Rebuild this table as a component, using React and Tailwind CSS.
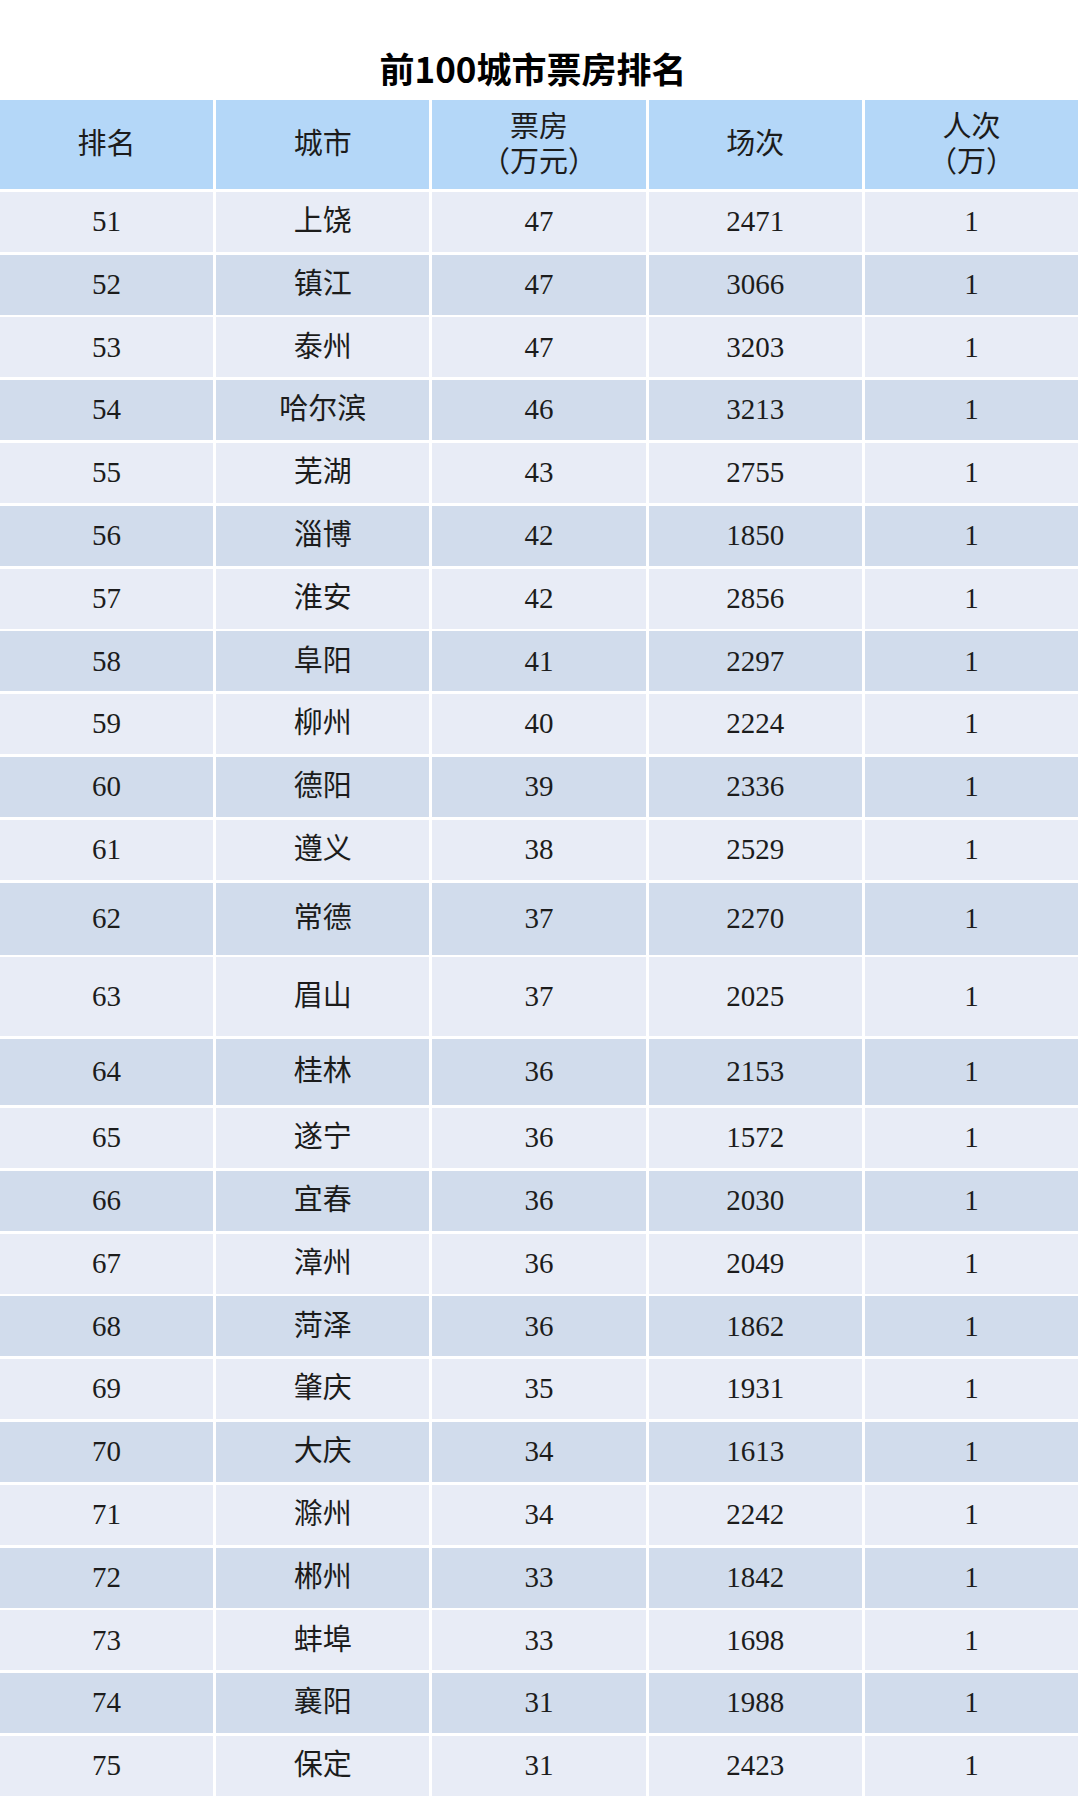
import React from "react";

const rows = [
  ["51", "上饶", "47", "2471", "1"],
  ["52", "镇江", "47", "3066", "1"],
  ["53", "泰州", "47", "3203", "1"],
  ["54", "哈尔滨", "46", "3213", "1"],
  ["55", "芜湖", "43", "2755", "1"],
  ["56", "淄博", "42", "1850", "1"],
  ["57", "淮安", "42", "2856", "1"],
  ["58", "阜阳", "41", "2297", "1"],
  ["59", "柳州", "40", "2224", "1"],
  ["60", "德阳", "39", "2336", "1"],
  ["61", "遵义", "38", "2529", "1"],
  ["62", "常德", "37", "2270", "1"],
  ["63", "眉山", "37", "2025", "1"],
  ["64", "桂林", "36", "2153", "1"],
  ["65", "遂宁", "36", "1572", "1"],
  ["66", "宜春", "36", "2030", "1"],
  ["67", "漳州", "36", "2049", "1"],
  ["68", "菏泽", "36", "1862", "1"],
  ["69", "肇庆", "35", "1931", "1"],
  ["70", "大庆", "34", "1613", "1"],
  ["71", "滁州", "34", "2242", "1"],
  ["72", "郴州", "33", "1842", "1"],
  ["73", "蚌埠", "33", "1698", "1"],
  ["74", "襄阳", "31", "1988", "1"],
  ["75", "保定", "31", "2423", "1"],
];

// a few rows in the picture are taller than the rest
const rowHeight = {
  62: "h-[72px]",
  63: "h-[79px]",
  64: "h-[66px]",
};

const headers = [
  ["排名"],
  ["城市"],
  ["票房", "（万元）"],
  ["场次"],
  ["人次", "（万）"],
];

const App = () => {
  return (
    <div
      className="w-[1080px] bg-white text-[#1c1c1c]"
      style={{ fontFamily: '"Liberation Serif", "Noto Sans CJK SC", serif' }}
    >
      <div className="h-[100px] pt-[35px] pr-[14px] flex items-center justify-center">
        <h1
          className="text-[35px] font-bold text-black leading-none"
          style={{ fontFamily: '"Noto Sans CJK SC", "Noto Sans", sans-serif' }}
        >
          前100城市票房排名
        </h1>
      </div>

      <div className="w-[1078px] grid grid-cols-5 gap-x-[3px] gap-y-[2.8px]">
        {headers.map((lines) => (
          <div
            key={lines[0]}
            className="h-[89px] bg-[#b4d7f8] flex flex-col items-center justify-center text-[29px] leading-[35px]"
          >
            {lines.map((line) => (
              <span key={line}>{line}</span>
            ))}
          </div>
        ))}

        {rows.map((row, i) => {
          const h = rowHeight[row[0]] || "h-[60px]";
          const bg = i % 2 === 0 ? "bg-[#e8ecf6]" : "bg-[#d1dcec]";
          return row.map((cell, j) => (
            <div
              key={`${row[0]}-${j}`}
              className={`${h} ${bg} flex items-center justify-center text-[29px]`}
            >
              {cell}
            </div>
          ));
        })}
      </div>
    </div>
  );
};

export default App;
